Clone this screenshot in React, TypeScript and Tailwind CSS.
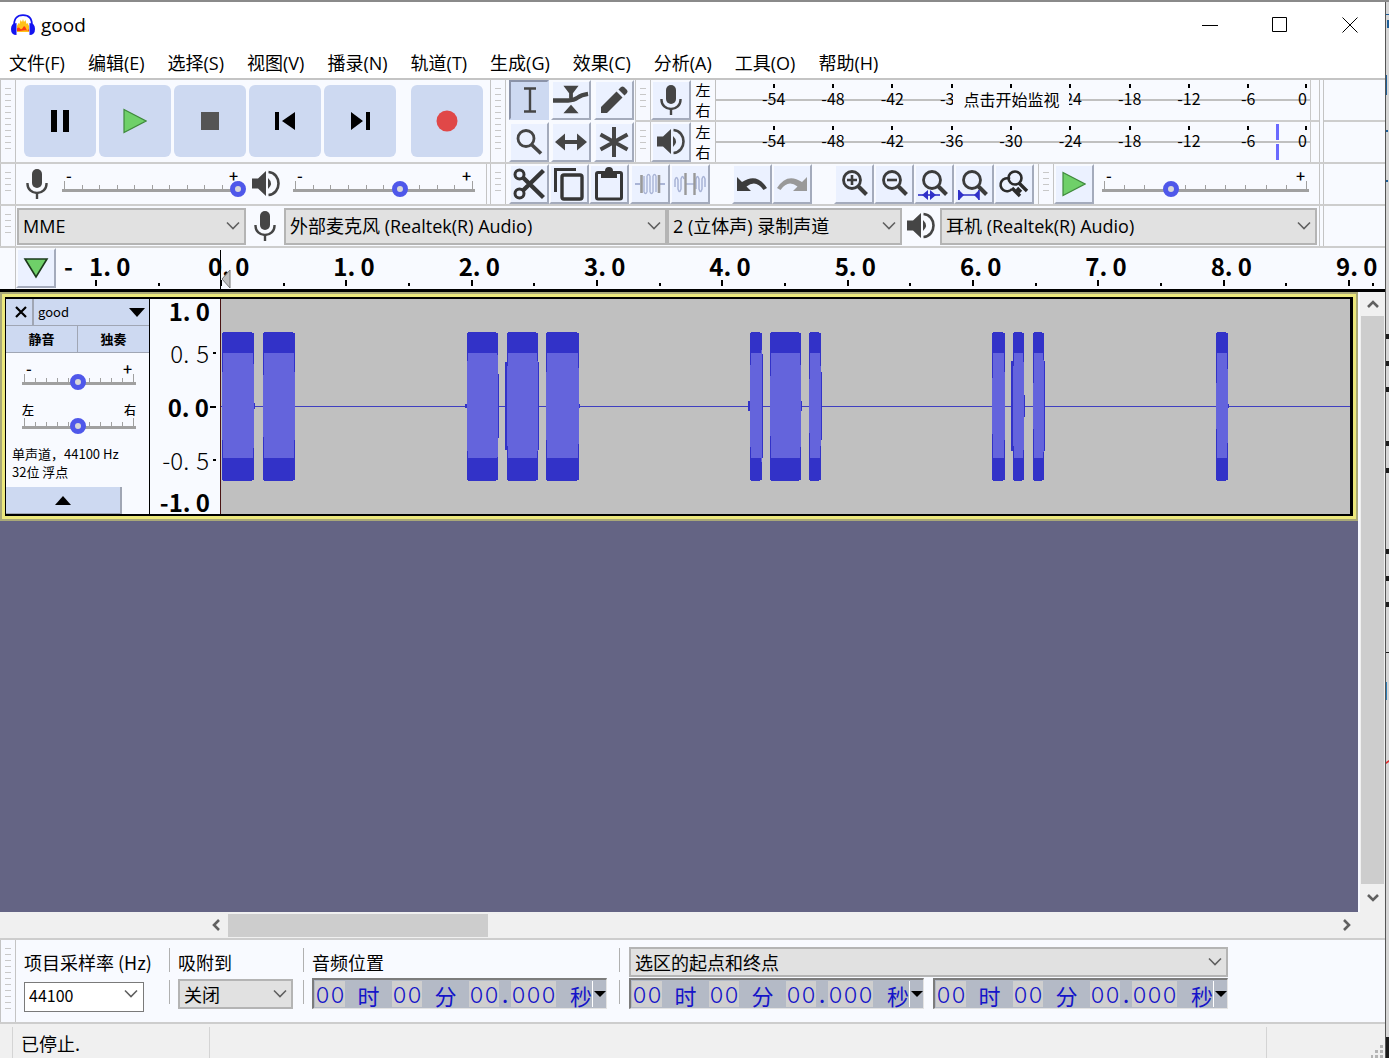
import { useState } from "react";
import type { ReactNode } from "react";
import clsx from "clsx";

const MENUS = [
  "文件(F)", "编辑(E)", "选择(S)", "视图(V)", "播录(N)", "轨道(T)",
  "生成(G)", "效果(C)", "分析(A)", "工具(O)", "帮助(H)",
];

const METER_LABELS = ["-54", "-48", "-42", "-36", "-30", "-24", "-18", "-12", "-6"];

// [left, right, leading edge half height, trailing edge half height]
const BURSTS = [
  [2, 33, 34, 42], [43, 74, 31, 34],
  [247, 277, 45, 51], [287, 317, 40, 45], [326, 358, 34, 38],
  [530, 541, 41, 56], [550, 581, 30, 41], [590, 601, 27, 40],
  [773, 785, 28, 34], [794, 804, 40, 44], [814, 824, 23, 46], [997, 1008, 23, 37],
];

// small bumps just outside some bursts: [x, half height]
const BUMPS = [
  [34, 3], [246, 2], [278, 32], [286, 44], [318, 44], [359, 2], [529, 5],
  [542, 52], [582, 5], [602, 34], [793, 45], [805, 11], [825, 45], [1009, 2],
];

/* ---------- icons ---------- */

function MicIcon() {
  return (
    <svg width="22" height="30" viewBox="0 0 22 30" fill="none" stroke="#454545">
      <rect x="6" y="0" width="10" height="19" rx="5" fill="#454545" stroke="none" />
      <path d="M1.500 14v1a9.500 9 0 0 0 19 0v-1" strokeWidth="2.400" />
      <path d="M11 24v6" strokeWidth="2.400" />
    </svg>
  );
}

function SpeakerIcon() {
  return (
    <svg width="28" height="28" viewBox="0 0 28 28">
      <path d="M0 8.500h6l8-7.500v25l-8-7.500H0z" fill="#454545" />
      <path d="M16 8q6 5.500 0 11z" fill="#454545" />
      <path d="M16.500 2C23 2.500 26.500 8 26.500 13.500S23 24.500 16.500 25" fill="none" stroke="#454545" strokeWidth="2.600" />
    </svg>
  );
}

function PlayIcon() {
  return (
    <svg width="24" height="26" viewBox="0 0 24 26">
      <path d="M1 1.500L23 13L1 24.500z" fill="#6fd069" stroke="#3f8a3c" strokeWidth="1.200" />
    </svg>
  );
}

function Chevron() {
  return (
    <svg width="14" height="9" viewBox="0 0 14 9" fill="none" className="pointer-events-none absolute top-1/2 right-1.5 -translate-y-1/2">
      <path d="M1 1l6 6l6-6" stroke="#606060" strokeWidth="1.600" />
    </svg>
  );
}

function ZoomGlass({ children }: { children?: ReactNode }) {
  return (
    <svg width="32" height="32" viewBox="0 0 32 32" fill="none" stroke="#3c3c3c">
      <circle cx="14" cy="12" r="8.500" strokeWidth="2.800" />
      <path d="M20 18l8.500 8.500" strokeWidth="4" />
      {children}
    </svg>
  );
}

const icons = {
  ibeam: (
    <svg width="32" height="32" viewBox="0 0 32 32" fill="none" stroke="#454545" strokeWidth="2.400">
      <path d="M11 4.500h12M11 27.500h12M17 4.500v23" />
    </svg>
  ),
  envelope: (
    <svg width="38" height="32" viewBox="0 0 38 32" fill="#454545">
      <path d="M11 1h16l-6 8h-4zM11 30h16l-8-9z" />
      <path d="M0 16.500h16q6 0 10-3t11-4" fill="none" stroke="#454545" strokeWidth="4.600" />
      <path d="M17 8h4v6h-4z" />
    </svg>
  ),
  pencil: (
    <svg width="30" height="30" viewBox="0 0 30 30" fill="#454545">
      <path d="M2 28v-6L17.500 6.500l6 6L8 28z" />
      <path d="M19.500 4.500l2.500-2.500q1.500-1.200 3 0l3 3q1.200 1.500 0 3L25.500 10.500z" />
    </svg>
  ),
  magnifier: (
    <svg width="32" height="32" viewBox="0 0 32 32" fill="none" stroke="#454545">
      <circle cx="13" cy="12.500" r="8" strokeWidth="2.800" />
      <path d="M19 19l9 8.500" strokeWidth="3.600" />
    </svg>
  ),
  timeshift: (
    <svg width="32" height="32" viewBox="0 0 32 32" fill="#454545">
      <path d="M0 16l10-8.500v6.500h12v-6.500L32 16l-10 8.500v-6.500H10v6.500z" />
    </svg>
  ),
  multi: (
    <svg width="32" height="32" viewBox="0 0 32 32" fill="none" stroke="#454545" strokeWidth="4">
      <path d="M16 1v30M2.500 8.500l27 15M29.500 8.500l-27 15" />
    </svg>
  ),
  cut: (
    <svg width="32" height="32" viewBox="0 0 32 32" fill="none" stroke="#363636">
      <circle cx="6.500" cy="6.500" r="4.500" strokeWidth="3" />
      <circle cx="6.500" cy="25.500" r="4.500" strokeWidth="3" />
      <path d="M10 9.500L30.500 29.500M10 22.500L30.500 2.500" strokeWidth="4.400" />
    </svg>
  ),
  copy: (
    <svg width="32" height="34" viewBox="0 0 32 34" fill="none" stroke="#363636" strokeWidth="3">
      <path d="M2.500 25V2.500H23" />
      <rect x="9" y="8" width="20" height="24" rx="2" strokeWidth="3.400" />
    </svg>
  ),
  paste: (
    <svg width="30" height="34" viewBox="0 0 30 34" fill="none" stroke="#363636" strokeWidth="3">
      <rect x="2.500" y="5.500" width="25" height="26.500" rx="1.500" />
      <path d="M7 4h4a4 4 0 0 1 8 0h4v7H7z" fill="#363636" stroke="none" />
    </svg>
  ),
  trim: (
    <svg width="30" height="24" viewBox="0 0 30 24" fill="none">
      <path d="M0 12h5M25 12h5" stroke="#a9b4d6" strokeWidth="2" />
      <path d="M9 4v16M12 20V4M15 4v16M18 20V4M21 4v16M9 20q1.500 3 3 0M12 4q1.500-3 3 0M15 20q1.500 3 3 0M18 4q1.500-3 3 0" stroke="#a9b4d6" strokeWidth="1.400" />
      <path d="M6.500 3v18M24 3v18" stroke="#999" strokeWidth="2.600" />
    </svg>
  ),
  silence: (
    <svg width="32" height="24" viewBox="0 0 32 24" fill="none">
      <path d="M1 15V8q1.500-5 3 0v9q1.500 5 3 0V7q1.500-5 3 0M22 17V7q1.500-5 3 0v10q1.500 5 3 0V7q1.500-5 3 0v8M12 12h8" stroke="#a9b4d6" strokeWidth="1.500" />
      <path d="M11.500 1v22M20.500 1v22" stroke="#999" strokeWidth="2.400" />
    </svg>
  ),
  undo: (
    <svg width="32" height="20" viewBox="0 0 32 20">
      <path d="M1 3v14h14l-4.500-4.500Q20 5 27.500 16l3.500-2Q21 -2 6 8z" fill="#3c3c3c" />
    </svg>
  ),
  redo: (
    <svg width="32" height="20" viewBox="0 0 32 20">
      <path d="M31 3v14H17l4.500-4.500Q12 5 4.500 16L1 14Q11 -2 26 8z" fill="#999" />
    </svg>
  ),
  zoomIn: <ZoomGlass><path d="M9 12h10M14 7v10" strokeWidth="2.600" /></ZoomGlass>,
  zoomOut: <ZoomGlass><path d="M9 12h10" strokeWidth="2.600" /></ZoomGlass>,
  zoomSel: (
    <ZoomGlass>
      <path d="M0 27h22" stroke="#3030c8" strokeWidth="1.600" />
      <path d="M4 27l6-5v10zM18 27l-6-5v10z" fill="#3030c8" stroke="none" />
    </ZoomGlass>
  ),
  zoomFit: (
    <ZoomGlass>
      <path d="M1 27h20M.8 22v10M21 22v10" stroke="#3030c8" strokeWidth="1.600" />
      <path d="M6 27l-5-5v10zM16 27l5-5v10z" fill="#3030c8" stroke="none" />
    </ZoomGlass>
  ),
  zoomToggle: (
    <svg width="32" height="32" viewBox="0 0 32 32" fill="none" stroke="#2b2b2b">
      <circle cx="17" cy="10" r="6.500" strokeWidth="2.600" />
      <path d="M12 11a6.500 6.500 0 1 0 2 10" strokeWidth="2.600" />
      <path d="M21 15l8 8M14 20l8 8M19 20l4 4" strokeWidth="3.400" />
    </svg>
  ),
};

/* ---------- small building blocks ---------- */

function Grip() {
  return (
    <div className="flex w-4 shrink-0 flex-col items-center justify-center self-stretch overflow-hidden border-x border-[#c4c4c4] bg-[#f7f9ff] py-2">
      <div className="h-full w-[6px] bg-[repeating-linear-gradient(to_bottom,#c8c8c8_0px,#c8c8c8_1px,transparent_1px,transparent_6px)]" />
    </div>
  );
}

function ToolButton({ label, pressed, onClick, children }: {
  label: string;
  pressed?: boolean;
  onClick?: () => void;
  children: ReactNode;
}) {
  return (
    <button
      aria-label={label}
      onClick={onClick}
      className={clsx(
        "flex size-10 shrink-0 items-center justify-center border-2",
        pressed
          ? "border-t-[#8b93a8] border-l-[#8b93a8] border-r-[#cdd9f1] border-b-[#cdd9f1] bg-[#cdd9f1]"
          : "border-t-[#f8faff] border-l-[#f8faff] border-r-[#a4abbc] border-b-[#a4abbc] bg-[#ebf1ff]"
      )}
    >
      {children}
    </button>
  );
}

function TransportButton({ label, children }: { label: string; children: ReactNode }) {
  return (
    <button aria-label={label} className="flex size-[72px] items-center justify-center rounded-md bg-[#cdd9f1]">
      {children}
    </button>
  );
}

function TickSlider({ label, initial, low = "-", high = "+", className }: {
  label: string;
  initial: number;
  low?: string;
  high?: string;
  className?: string;
}) {
  const [value, setValue] = useState(initial);
  const cjk = low !== "-";

  return (
    <div className={className}>
      <div className={clsx("flex justify-between font-medium", cjk ? "text-xs leading-4" : "px-1 text-base leading-3")}>
        <span>{low}</span>
        <span>{high}</span>
      </div>
      <div className="relative">
        <div className="flex h-2 items-end justify-between px-0.5">
          {Array.from({ length: 11 }, (_, i) => (
            <span key={i} className={clsx("w-px bg-[#a0a0a0]", i % 10 ? "h-1" : "h-2")} />
          ))}
        </div>
        <div className="h-[3px] bg-[#a0a0a0]" />
        <input
          type="range"
          aria-label={label}
          min={0}
          max={100}
          value={value}
          onChange={(e) => setValue(Number(e.target.value))}
          className="absolute top-0 -left-1.5 h-4 w-[calc(100%+12px)] appearance-none bg-transparent [&::-webkit-slider-thumb]:size-4 [&::-webkit-slider-thumb]:appearance-none [&::-webkit-slider-thumb]:rounded-full [&::-webkit-slider-thumb]:border-[5px] [&::-webkit-slider-thumb]:border-[#4f58ea] [&::-webkit-slider-thumb]:bg-[#d8d8d8]"
        />
      </div>
    </div>
  );
}

function Dropdown({ label, value, className }: { label: string; value: string; className?: string }) {
  return (
    <div className={clsx("relative", className)}>
      <select aria-label={label} className="h-full w-full appearance-none border-2 border-[#b4b4b4] bg-[#e1e1e1] px-1 text-lg leading-6">
        <option>{value}</option>
      </select>
      <Chevron />
    </div>
  );
}

function Meter({ label, icon, labels, children }: {
  label: string;
  icon: ReactNode;
  labels: string[];
  children?: ReactNode;
}) {
  return (
    <div className="flex h-[42px] border-b-2 border-[#cdcdcd] last:border-b-0">
      <Grip />
      <ToolButton label={label}>{icon}</ToolButton>
      <div className="flex w-6 flex-col items-center justify-center text-[15px] leading-5">
        <span>左</span>
        <span>右</span>
      </div>
      <div className="relative mr-2 flex-1">
        <div className="absolute inset-0 flex flex-col border-r border-[#c8c8c8]">
          <div className="flex-1 border-b border-l border-[#c0c0c0]" />
          <div className="flex-1 border-t border-l border-[#c0c0c0]" />
        </div>
        <div className="relative flex h-full pl-[29px] text-base leading-5">
          {labels.map((t, i) => (
            <div key={i} className="flex flex-1 flex-col items-center pt-1">
              <span className="h-1 w-0.5 bg-black" />
              <span>{t}</span>
            </div>
          ))}
          <div className="flex w-[33px] flex-col items-end pt-1 pr-1">
            <span className="h-1 w-0.5 bg-black" />
            <span>0</span>
          </div>
        </div>
        {children}
      </div>
    </div>
  );
}

// ruler figures give the decimal point a full digit cell
function Figure({ value }: { value: string }) {
  const [whole, frac] = value.split(".");
  return (
    <span className="whitespace-nowrap">
      {whole}<span className="inline-block w-[13px] text-left">.</span>{frac}
    </span>
  );
}

function Digits({ value }: { value: string }) {
  return (
    <span className="flex bg-[#cfcfcf]">
      {value.split("").map((d, i) => <span key={i} className="w-[15px] text-center">{d}</span>)}
    </span>
  );
}

function TimeField({ label }: { label: string }) {
  return (
    <div role="group" aria-label={label} className="flex h-[31px] items-stretch border-t-2 border-r border-b border-l-2 border-t-[#7c7c7c] border-l-[#7c7c7c] border-r-[#e3e3e3] border-b-[#e3e3e3] bg-[#b4bac6] py-px pl-px font-['Inter',sans-serif] text-[22px] leading-7 font-light text-[#1414c8]">
      <Digits value="00" />
      <span className="w-[47px] text-center font-['Noto_Sans_CJK_SC',sans-serif] font-normal">时</span>
      <Digits value="00" />
      <span className="w-[47px] text-center font-['Noto_Sans_CJK_SC',sans-serif] font-normal">分</span>
      <Digits value="00" />
      <span className="w-3 text-center font-medium">.</span>
      <Digits value="000" />
      <span className="w-9 text-right font-['Noto_Sans_CJK_SC',sans-serif] font-normal">秒</span>
      <button aria-label={`${label} 格式`} className="flex w-[14px] items-center justify-center border-l border-white">
        <svg width="12" height="6" viewBox="0 0 12 6"><path d="M0 0h12L6 6z" /></svg>
      </button>
    </div>
  );
}

/* ---------- window parts ---------- */

function TitleBar() {
  return (
    <header className="flex h-[46px] items-center bg-white pl-[11px]">
      <svg width="24" height="22" viewBox="0 0 24 22">
        <path d="M6 18V12l1.500-3 1 1 1-4 1.500 2 1-3 1 3 1.500-2 1 4 1-1L18 12v6z" fill="#ffc21a" />
        <path d="M6 14.500q1.500-2 3 0t3-1 3 1 3 0v2.500q-3-1-6-.5t-6 .5z" fill="#ff3a10" />
        <path d="M3 12C3 4 6 1.200 12 1.200S21 4 21 12" fill="none" stroke="#1414f0" strokeWidth="1.800" />
        <path d="M5.500 9v12Q0 21 0 15t5.500-6zM18.500 9v12Q24 21 24 15t-5.500-6z" fill="#1414f0" />
      </svg>
      <h1 className="flex-1 pl-1.5 font-['Open_Sans',sans-serif] text-[19px]">good</h1>
      <div className="flex gap-[22px] pr-[11px]">
        <button aria-label="最小化" className="flex size-12 items-center justify-center">
          <svg width="16" height="16" viewBox="0 0 16 16"><path d="M0 8.500h16" stroke="#000" /></svg>
        </button>
        <button aria-label="最大化" className="flex size-12 items-center justify-center">
          <svg width="16" height="16" viewBox="0 0 16 16"><path d="M.5.5h14v14h-14z" fill="none" stroke="#000" /></svg>
        </button>
        <button aria-label="关闭" className="flex size-12 items-center justify-center">
          <svg width="16" height="16" viewBox="0 0 16 16"><path d="M.5.5l15 15M15.500.5l-15 15" stroke="#000" /></svg>
        </button>
      </div>
    </header>
  );
}

function ToolbarRow({ className, children }: { className?: string; children: ReactNode }) {
  return (
    <div className={clsx("flex border-b-2 border-[#cdcdcd]", className)}>
      <div className="flex flex-1">{children}</div>
      <div className="w-[5px] border-x border-[#c4c4c4]" />
      <div className="flex w-[61px] flex-col">
        {className === "h-[84px]" && <div className="h-[42px] border-b-2 border-[#cdcdcd]" />}
      </div>
    </div>
  );
}

function Toolbars() {
  const [tool, setTool] = useState("ibeam");
  const tools: [string, string, ReactNode][] = [
    ["ibeam", "选择工具", icons.ibeam],
    ["envelope", "包络工具", icons.envelope],
    ["pencil", "绘制工具", icons.pencil],
    ["magnifier", "缩放工具", icons.magnifier],
    ["timeshift", "时间移动工具", icons.timeshift],
    ["multi", "多功能工具", icons.multi],
  ];

  return (
    <section className="border-t-2 border-[#c4c4c4] bg-[#f8faff]">
      <ToolbarRow className="h-[84px]">
        <Grip />
        <div className="flex w-[474px] items-center gap-[3px] pl-2">
          <TransportButton label="暂停">
            <svg width="20" height="22" viewBox="0 0 20 22"><path d="M1 0h6v22H1zM13 0h6v22h-6z" /></svg>
          </TransportButton>
          <TransportButton label="播放"><PlayIcon /></TransportButton>
          <TransportButton label="停止">
            <svg width="20" height="20" viewBox="0 0 20 20"><path d="M1 1h18v18H1z" fill="#555" /></svg>
          </TransportButton>
          <TransportButton label="跳至开头">
            <svg width="20" height="20" viewBox="0 0 20 20"><path d="M0 1h4v18H0zM20 1v18L7 10z" /></svg>
          </TransportButton>
          <TransportButton label="跳至结尾">
            <svg width="20" height="20" viewBox="0 0 20 20"><path d="M16 1h4v18h-4zM1 1v18l12-9z" /></svg>
          </TransportButton>
          <div className="w-[9px]" />
          <TransportButton label="录制">
            <svg width="22" height="22" viewBox="0 0 22 22"><circle cx="11" cy="11" r="10.500" fill="#e04848" /></svg>
          </TransportButton>
        </div>
        <Grip />
        <div className="grid w-[129px] grid-cols-3 content-between justify-items-center pl-[2px]">
          {tools.map(([id, label, icon]) => (
            <ToolButton key={id} label={label} pressed={tool === id} onClick={() => setTool(id)}>{icon}</ToolButton>
          ))}
        </div>
        <div className="flex flex-1 flex-col">
          {/* the -30 mark is left blank here, the monitoring hint takes its place */}
          <Meter label="录音电平" icon={<MicIcon />} labels={METER_LABELS.map((t) => (t === "-30" ? "" : t))}>
            <button className="absolute top-[9px] left-[40%] bg-[#f8faff] px-2.5 text-base leading-5 whitespace-nowrap">点击开始监视</button>
          </Meter>
          <Meter label="播放电平" icon={<SpeakerIcon />} labels={METER_LABELS}>
            <div className="absolute inset-y-0.5 right-8 flex w-[3px] flex-col gap-1">
              <span className="flex-1 bg-[#6a6aff]" />
              <span className="flex-1 bg-[#6a6aff]" />
            </div>
          </Meter>
        </div>
      </ToolbarRow>

      <ToolbarRow className="h-[42px]">
        <Grip />
        <div className="flex w-[470px] items-center pl-2.5">
          <MicIcon />
          <TickSlider label="录音音量" initial={99} className="mr-[10px] ml-3.5 w-[180px] pb-[7px]" />
          <SpeakerIcon />
          <TickSlider label="播放音量" initial={59} className="ml-[13px] w-[182px] pb-[7px]" />
        </div>
        <div className="w-1 border-l border-[#c4c4c4]" />
        <Grip />
        <div className="flex w-[532px] items-center pl-[3px]">
          <ToolButton label="剪切">{icons.cut}</ToolButton>
          <ToolButton label="复制">{icons.copy}</ToolButton>
          <ToolButton label="粘贴">{icons.paste}</ToolButton>
          <div className="w-px" />
          <ToolButton label="修剪音频">{icons.trim}</ToolButton>
          <ToolButton label="静音音频">{icons.silence}</ToolButton>
          <div className="w-[22px]" />
          <ToolButton label="撤销">{icons.undo}</ToolButton>
          <ToolButton label="重做">{icons.redo}</ToolButton>
          <div className="w-[22px]" />
          <ToolButton label="放大">{icons.zoomIn}</ToolButton>
          <ToolButton label="缩小">{icons.zoomOut}</ToolButton>
          <ToolButton label="适应选区">{icons.zoomSel}</ToolButton>
          <ToolButton label="适应项目">{icons.zoomFit}</ToolButton>
          <ToolButton label="缩放切换">{icons.zoomToggle}</ToolButton>
        </div>
        <Grip />
        <div className="flex flex-1 items-center">
          <ToolButton label="按速度播放"><PlayIcon /></ToolButton>
          <TickSlider label="播放速度" initial={33} className="mr-[10px] ml-2 flex-1 pb-[7px]" />
        </div>
      </ToolbarRow>

      <ToolbarRow className="h-[42px]">
        <Grip />
        <div className="flex flex-1 items-center pr-0.5 pl-px font-['Open_Sans','Noto_Sans_CJK_SC',sans-serif]">
          <Dropdown label="音频主机" value="MME" className="h-[37px] w-[229px]" />
          <div className="flex w-[38px] justify-center"><MicIcon /></div>
          <Dropdown label="录音设备" value="外部麦克风 (Realtek(R) Audio)" className="h-[37px] w-[383px]" />
          <Dropdown label="录音声道" value="2 (立体声) 录制声道" className="h-[37px] w-[235px]" />
          <div className="flex w-[38px] justify-center"><SpeakerIcon /></div>
          <Dropdown label="播放设备" value="耳机 (Realtek(R) Audio)" className="h-[37px] flex-1" />
        </div>
      </ToolbarRow>
    </section>
  );
}

function RulerCell({ value, className, signed }: { value: string; className: string; signed?: boolean }) {
  return (
    <div className={clsx("flex flex-col justify-between pt-1.5 pb-[3px]", className)}>
      <span className={signed ? "pl-1.5" : ""}><Figure value={value} /></span>
      <div className="ml-3 flex w-full items-end">
        <span className="h-1.5 w-1/2 border-l-2 border-black" />
        <span className="h-[3px] w-1/2 border-l-2 border-black" />
      </div>
    </div>
  );
}

function TimeRuler() {
  return (
    <section className="flex h-11 border-b-3 border-black bg-[#f8faff]">
      <div className="w-4 border-r border-[#c4c4c4]" />
      <ToolButton label="固定播放头">
        <svg width="26" height="22" viewBox="0 0 26 22">
          <path d="M2 2h22L13 20z" fill="#6fd069" stroke="#1c3a1c" strokeWidth="1.600" />
        </svg>
      </ToolButton>
      <div className="relative flex flex-1 overflow-hidden text-2xl leading-6 font-bold">
        <span className="w-[27px] pt-1.5 pl-2">-</span>
        <RulerCell value="1.0" signed className="w-[125px]" />
        {[0, 1, 2, 3, 4, 5, 6, 7, 8].map((n) => (
          <RulerCell key={n} value={`${n}.0`} className="flex-1" />
        ))}
        <RulerCell value="9.0" className="w-[49px] overflow-hidden" />
        <div className="absolute top-0.5 bottom-0 left-[164px] flex items-end border-l border-black">
          <svg width="10" height="20" viewBox="0 0 10 20"><path d="M9 1v18L1 10z" fill="#c0c0c0" stroke="#777" /></svg>
        </div>
      </div>
    </section>
  );
}

function TrackPanel() {
  return (
    <div className="flex w-[144px] shrink-0 flex-col border-r border-black bg-[#f8faff] text-[13px]">
      <div className="flex h-[27px] border-b border-[#a0a6b4] bg-[#cdd9f1]">
        <button aria-label="关闭轨道" className="flex w-[28px] items-center justify-center border-r-2 border-[#a0a6b4] pl-1">
          <svg width="12" height="12" viewBox="0 0 12 12"><path d="M1 1l10 10M11 1L1 11" stroke="#000" strokeWidth="2.200" /></svg>
        </button>
        <button className="flex flex-1 items-center justify-between px-1">
          <span>good</span>
          <svg width="16" height="9" viewBox="0 0 16 9"><path d="M0 0h16L8 9z" /></svg>
        </button>
      </div>
      <div className="flex h-[27px] border-b border-[#a0a6b4] bg-[#cdd9f1] font-bold">
        <button className="flex-1 border-r border-[#a0a6b4]">静音</button>
        <button className="flex-1">独奏</button>
      </div>
      <TickSlider label="增益" initial={49} className="mt-[9px] ml-4 w-[114px]" />
      <TickSlider label="声像" initial={49} low="左" high="右" className="mt-[17px] ml-4 w-[114px]" />
      <div className="mt-4 flex-1 pl-1.5 leading-[18px]">
        <p>单声道，44100 Hz</p>
        <p>32位 浮点</p>
      </div>
      <button aria-label="折叠" className="flex h-[27px] w-[116px] items-center justify-center border-r-2 border-b border-[#a0a6b4] bg-[#cdd9f1]">
        <svg width="16" height="9" viewBox="0 0 16 9"><path d="M0 9h16L8 0z" /></svg>
      </button>
    </div>
  );
}

function VerticalRuler() {
  return (
    <div className="flex w-[70px] shrink-0 flex-col bg-[#f8faff] pr-1 text-right text-2xl leading-6">
      <span className="pr-1.5 font-bold"><Figure value="1.0" /></span>
      <div className="flex flex-1 flex-col justify-between py-[18px]">
        <span className="flex items-center justify-end gap-1 font-light"><Figure value="0.5" /><i className="h-0.5 w-[3px] bg-black" /></span>
        <span className="flex items-center justify-end gap-px font-bold"><Figure value="0.0" /><i className="h-0.5 w-1.5 bg-black" /></span>
        <span className="flex items-center justify-end gap-1 font-light"><Figure value="-0.5" /><i className="h-0.5 w-[3px] bg-black" /></span>
      </div>
      <span className="pr-1.5 font-bold"><Figure value="-1.0" /></span>
    </div>
  );
}

function Waveform() {
  return (
    <svg className="block h-full w-full" viewBox="0 0 1131 216" preserveAspectRatio="none" shapeRendering="crispEdges">
      <rect width="1131" height="216" fill="#c0c0c0" />
      <rect y="107" width="1131" height="1" fill="#3f3fc0" />
      {BUMPS.map(([x, h]) => (
        <rect key={x} x={x - 1} y={107.5 - h} width="2" height={h * 2} fill="#3232c8" />
      ))}
      {BURSTS.map(([a, b, lead, trail]) => (
        <g key={a}>
          <rect x={a} y="34" width={b - a + 1} height="148" fill="#3232c8" />
          <rect x={a + 1} y="33" width={b - a - 2} height="150" fill="#3232c8" />
          <rect x={a + 1} y="54" width={b - a - 1} height="106" fill="#6464dc" />
          <rect x={a} y={107.5 - lead} width="1" height={lead * 2} fill="#6464dc" />
          <rect x={b} y={107.5 - trail} width="1" height={trail * 2} fill="#6464dc" />
        </g>
      ))}
      <rect width="1" height="216" fill="#4a1414" />
    </svg>
  );
}

function TrackArea() {
  return (
    <main className="flex flex-1 bg-[#646484]">
      <div className="flex-1">
        <div className="border-2 border-[#a9a878]">
          <div className="border-[3px] border-[#ece87c]">
            <div className="flex h-[219px] border-t-2 border-r-3 border-b-2 border-l border-black">
              <TrackPanel />
              <VerticalRuler />
              <div className="min-w-0 flex-1"><Waveform /></div>
            </div>
          </div>
        </div>
      </div>
      <div className="flex w-[27px] flex-col border-l-2 border-[#f8faff] bg-[#f0f0f0] px-px">
        <button aria-label="向上滚动" className="flex h-6 items-center justify-center">
          <svg width="12" height="8" viewBox="0 0 12 8"><path d="M1 7l5-5l5 5" fill="none" stroke="#606060" strokeWidth="2.600" /></svg>
        </button>
        <div className="flex-1 bg-[#cdcdcd]" />
        <button aria-label="向下滚动" className="flex h-7 items-center justify-center">
          <svg width="12" height="8" viewBox="0 0 12 8"><path d="M1 1l5 5l5-5" fill="none" stroke="#606060" strokeWidth="2.600" /></svg>
        </button>
      </div>
    </main>
  );
}

function HorizontalScroll() {
  return (
    <div className="flex h-[26px] bg-[#f0f0f0] pr-[26px] pl-[202px]">
      <button aria-label="向左滚动" className="flex w-[26px] items-center justify-center">
        <svg width="9" height="12" viewBox="0 0 9 12"><path d="M8 1L3 6l5 5" fill="none" stroke="#606060" strokeWidth="2.600" /></svg>
      </button>
      <div className="flex flex-1 pt-0.5 pb-px">
        <div className="w-[260px] bg-[#cdcdcd]" />
      </div>
      <button aria-label="向右滚动" className="flex w-[24px] items-center justify-center">
        <svg width="9" height="12" viewBox="0 0 9 12"><path d="M1 1l5 5l-5 5" fill="none" stroke="#606060" strokeWidth="2.600" /></svg>
      </button>
    </div>
  );
}

function Divider() {
  return (
    <div className="flex flex-col gap-2 pt-px">
      <span className="h-6 w-px bg-[#b0b0b0]" />
      <span className="h-6 w-px bg-[#b0b0b0]" />
    </div>
  );
}

function SelectionBar() {
  const [rate, setRate] = useState("44100");

  return (
    <section className="flex h-[86px] border-y-2 border-[#cdcdcd] bg-[#f8faff] text-lg leading-[30px]">
      <Grip />
      <div className="flex pt-[7px] pl-2">
        <div className="w-[145px]">
          <label htmlFor="rate" className="block whitespace-nowrap">项目采样率 (Hz)</label>
          <div className="relative mt-0.5 h-[30px] w-[120px]">
            <input
              id="rate"
              value={rate}
              onChange={(e) => setRate(e.target.value)}
              className="h-full w-full border border-[#7a7a7a] bg-white px-1 pb-1 text-base"
            />
            <Chevron />
          </div>
        </div>
        <Divider />
        <div className="w-[133px] pl-2">
          <span>吸附到</span>
          <Dropdown label="吸附到" value="关闭" className="mt-0.5 h-[30px] w-[115px]" />
        </div>
        <Divider />
        <div className="w-[315px] pl-2">
          <span>音频位置</span>
          <div className="mt-px w-fit"><TimeField label="音频位置" /></div>
        </div>
        <Divider />
        <div className="pl-[9px]">
          <Dropdown label="选区格式" value="选区的起点和终点" className="h-[30px] w-full" />
          <div className="mt-px flex gap-[9px]">
            <TimeField label="选区起点" />
            <TimeField label="选区终点" />
          </div>
        </div>
      </div>
    </section>
  );
}

function StatusBar() {
  return (
    <footer className="flex h-[34px] bg-[#f0f0f0] pt-[3px] text-lg leading-8">
      <div className="ml-3 w-[198px] border-x border-[#d4d4d4] pl-2">已停止.</div>
      <div className="flex-1 border-r border-[#d4d4d4]" />
      <div className="flex w-[118px] items-end justify-end">
        <svg width="14" height="14" viewBox="0 0 14 14" fill="#b4b4b4">
          <path d="M9 1h3v3H9zM9 6h3v3H9zM9 11h3v3H9zM4 6h3v3H4zM4 11h3v3H4zM0 11h2v3H0z" />
        </svg>
      </div>
    </footer>
  );
}

// sliver of the window that sits behind this one
function BackdropEdge() {
  return (
    <div className="w-1 shrink-0 overflow-hidden border-l border-[#555] bg-[#d6d6d6]">
      <svg className="block" width="3" height="1056" viewBox="0 2 3 1056">
        <path d="M0 14h3v1H0zM1 20h2v8H1zM0 75h1v20H0zM0 130h2v2H0zM0 180h2v2H0z" fill="#1f5f98" />
        <path d="M0 334h3v5H0zM0 361h3v5H0zM0 387h3v5H0zM0 441h3v5H0zM0 468h3v5H0zM0 549h3v5H0zM0 576h3v5H0zM0 602h3v5H0zM0 652h3v1H0zM0 1037h3v21H0z" fill="#1c1c1c" />
        <path d="M0 682h1v18H0z" fill="#2f7fb8" />
        <path d="M0 762l3-2v2l-3 2z" fill="#e03030" />
      </svg>
    </div>
  );
}

export default function App() {
  return (
    <div className="flex min-h-screen border-t-2 border-[#8a8a8a] font-['Noto_Sans_CJK_SC',sans-serif] text-black">
      <div className="flex min-w-0 flex-1 flex-col">
        <TitleBar />
        <nav className="flex h-[30px] items-center gap-[23px] bg-white pb-px pl-[9px] font-['Open_Sans','Noto_Sans_CJK_SC',sans-serif] text-lg">
          {MENUS.map((m) => <button key={m} className="whitespace-nowrap">{m}</button>)}
        </nav>
        <Toolbars />
        <TimeRuler />
        <TrackArea />
        <HorizontalScroll />
        <SelectionBar />
        <StatusBar />
      </div>
      <BackdropEdge />
    </div>
  );
}
